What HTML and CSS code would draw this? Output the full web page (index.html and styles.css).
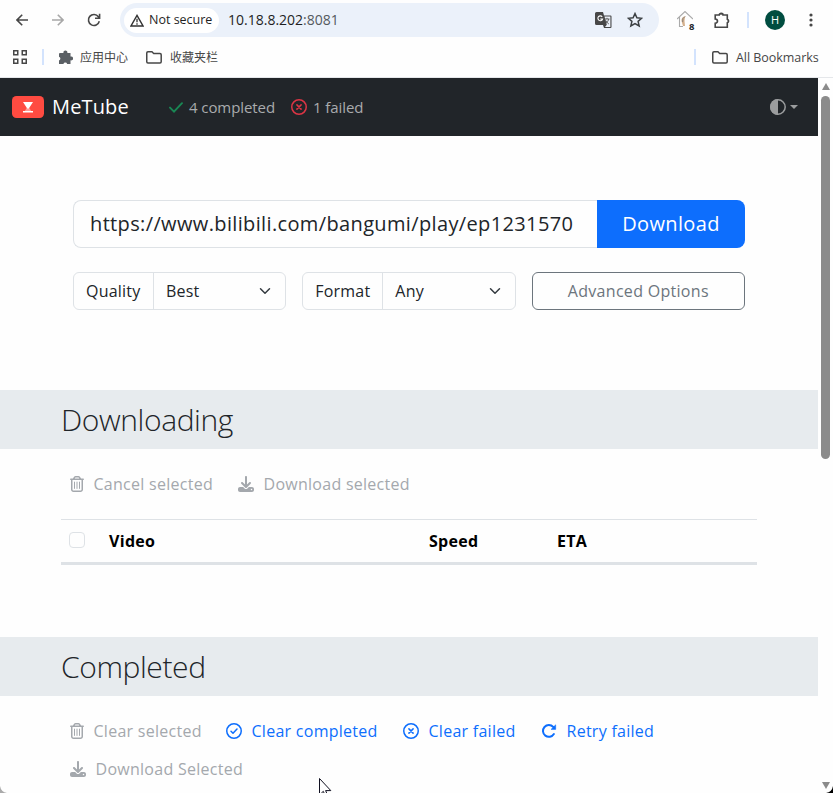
FILE: index.html
```html
<!DOCTYPE html>
<html lang="en">
<head>
<meta charset="utf-8">
<title>MeTube</title>
<link rel="stylesheet" href="styles.css">
</head>
<body>
<svg class="defs" width="0" height="0">
  <symbol id="trash" viewBox="0 0 448 512"><path fill="currentColor" d="M170.500 51.600L151.500 80l145 0-19-28.400c-1.500-2.200-4-3.600-6.700-3.600l-93.700 0c-2.700 0-5.200 1.300-6.700 3.600zm147-26.600L354.200 80 424 80c13.300 0 24 10.700 24 24s-10.700 24-24 24l-8 0 0 304c0 44.200-35.800 80-80 80l-224 0c-44.200 0-80-35.800-80-80l0-304-8 0c-13.300 0-24-10.700-24-24S10.700 80 24 80l69.800 0 36.700-55.100C140.900 9.400 158.400 0 177.100 0l93.700 0c18.700 0 36.200 9.400 46.600 24.900zM80 128l0 304c0 17.700 14.300 32 32 32l224 0c17.700 0 32-14.300 32-32l0-304L80 128zm80 64l0 208c0 8.800-7.200 16-16 16s-16-7.200-16-16l0-208c0-8.800 7.200-16 16-16s16 7.200 16 16zm80 0l0 208c0 8.800-7.200 16-16 16s-16-7.200-16-16l0-208c0-8.800 7.200-16 16-16s16 7.200 16 16zm80 0l0 208c0 8.800-7.200 16-16 16s-16-7.200-16-16l0-208c0-8.800 7.200-16 16-16s16 7.200 16 16z"/></symbol>
  <symbol id="download" viewBox="0 0 512 512"><path fill="currentColor" d="M288 32c0-17.700-14.300-32-32-32s-32 14.300-32 32l0 242.700-73.400-73.400c-12.500-12.500-32.800-12.500-45.300 0s-12.500 32.800 0 45.300l128 128c12.500 12.500 32.800 12.500 45.300 0l128-128c12.500-12.500 12.500-32.800 0-45.300s-32.800-12.500-45.300 0L288 274.700 288 32zM64 352c-35.300 0-64 28.700-64 64l0 32c0 35.300 28.700 64 64 64l384 0c35.300 0 64-28.700 64-64l0-32c0-35.300-28.700-64-64-64l-101.500 0-45.300 45.300c-25 25-65.500 25-90.500 0L165.500 352 64 352zm368 56a24 24 0 1 1 0 48 24 24 0 1 1 0-48z"/></symbol>
  <symbol id="xcircle" viewBox="0 0 16 16"><g fill="none" stroke="currentColor" stroke-width="1.5" stroke-linecap="round"><circle cx="8" cy="8" r="7.250"/><path d="M5.900 5.900l4.200 4.200M10.100 5.900l-4.200 4.200"/></g></symbol>
  <symbol id="okcircle" viewBox="0 0 16 16"><g fill="none" stroke="currentColor" stroke-width="1.500" stroke-linecap="round" stroke-linejoin="round"><circle cx="8" cy="8" r="7.250"/><path d="M5 8.200l2 2 4-4.100"/></g></symbol>
  <symbol id="folder" viewBox="0 0 16 13"><path d="M.75 2q0-1.200 1.200-1.200h4L7.700 2.500h6.300q1.200 0 1.200 1.200v7q0 1.200-1.200 1.200H2q-1.250 0-1.250-1.200z" fill="none" stroke="currentColor" stroke-width="1.500"/></symbol>
  <symbol id="chevron" viewBox="0 0 16 16"><path d="M2 5l6 6 6-6" fill="none" stroke="#343a40" stroke-width="2" stroke-linecap="round" stroke-linejoin="round"/></symbol>
</svg>

<header class="browser">
  <div class="toolbar">
    <svg class="back" width="12" height="12" viewBox="0 0 12 12"><path d="M12 6H1M6.200.8L1 6l5.200 5.200" fill="none" stroke="#474747" stroke-width="1.600"/></svg>
    <svg class="fwd" width="12" height="12" viewBox="0 0 12 12"><path d="M0 6h11M5.800.8L11 6l-5.200 5.200" fill="none" stroke="#a8a8a8" stroke-width="1.600"/></svg>
    <svg class="reload" width="14" height="14" viewBox="0 0 14 14"><path d="M12.300 8.300A5.500 5.500 0 1 1 11.400 3.700L12.500 5M12.600.8v4.500H8" fill="none" stroke="#474747" stroke-width="1.600"/></svg>
    <div class="omnibox">
      <div class="chip">
        <svg width="14" height="13" viewBox="0 0 14 13"><path d="M7 1.400L13 12H1z" fill="none" stroke="#333" stroke-width="1.400"/><path d="M7 4.800v3.500M7 9.200v1.500" stroke="#333" stroke-width="1.300"/></svg>
        <span>Not secure</span>
      </div>
      <span class="address">10.18.8.202<span class="port">:8081</span></span>
      <svg class="translate" width="17" height="17" viewBox="0 0 17 17"><path d="M1.500 0H8l1 3.500h6.500q1 0 1 1V15q0 1-1 1H9l-1-3H1.500Q0 13 0 11.500v-10Q0 0 1.500 0z" fill="#474747"/><path d="M9.500 4.600h5.900v10.300H10l1.800-2.200z" fill="#edf2fa"/><path d="M7.200 4.800A2.400 2.400 0 1 0 7.600 7H5.200" fill="none" stroke="#fff" stroke-width="1.100"/><path d="M9.500 7h5M12 5.800V7M13.800 7q-.7 3-3 4.300M10.600 8.300q1.100 2.200 3.300 3.800" fill="none" stroke="#555" stroke-width=".9"/></svg>
      <svg class="star" width="16" height="16" viewBox="0 0 15 15"><path d="M7.500 1.500l1.800 4 4.400.4-3.300 2.900 1 4.300-3.900-2.300-3.900 2.300 1-4.300L1.300 5.900l4.400-.4z" fill="none" stroke="#3c4043" stroke-width="1.400"/></svg>
    </div>
    <div class="ext">
      <svg width="16" height="16" viewBox="0 0 16 16"><path d="M0 8l8-7.500L16 8M2.500 6v9.500H6" fill="none" stroke="#aaa" stroke-width="1.100"/><path d="M8.500 5Q4 6 4.500 10l1.500 5h2l-.5-5q0-3 1-5z" fill="#d4b08c"/><path d="M8 5.500Q5 7 5.600 11" fill="none" stroke="#777" stroke-width=".8"/></svg>
      <b class="badge">8</b>
    </div>
    <svg class="puzzle" width="17" height="17" viewBox="0 0 17 17"><path d="M1.200 3h4a1.900 1.600 0 0 1 3.800 0h4.300v4.200a1.900 1.900 0 0 1 0 3.600v4.500H1.200v-4q2.300-.3 2.300-2.200T1.200 7z" fill="none" stroke="#474747" stroke-width="1.600"/><path d="M5.700 2.600a1.500 1.500 0 0 1 2.800 0zM13.700 7.500a1.700 1.700 0 0 1 0 3z" fill="#474747"/></svg>
    <i class="sep"></i>
    <div class="avatar">H</div>
    <svg class="dots" width="4" height="14" viewBox="0 0 4 14" fill="#474747"><circle cx="2" cy="2" r="1.600"/><circle cx="2" cy="7" r="1.600"/><circle cx="2" cy="12" r="1.600"/></svg>
  </div>
  <div class="bookmarks">
    <svg class="grid" width="14" height="14" viewBox="0 0 14 14" fill="none" stroke="#474747" stroke-width="1.500"><path d="M.75.75h4v4h-4zM9.250.75h4v4h-4zM.75 9.250h4v4h-4zM9.250 9.250h4v4h-4z"/></svg>
    <i class="sep"></i>
    <svg class="app" width="14" height="14" viewBox="0 0 14 14"><path d="M1 3h3.500a2 2 0 1 1 3.800 0H11.500v3.500a2 2 0 1 1 0 3.800V14H8.200a2 2 0 0 0-3.800 0H0v-3.500a2 2 0 0 0 0-3.800V4q0-1 1-1z" fill="#5a5f64"/></svg>
    <span class="bm">应用中心</span>
    <svg class="fold" width="16" height="13"><use href="#folder"/></svg>
    <span class="bm">收藏夹栏</span>
    <i class="sep last"></i>
    <svg class="fold2" width="16" height="13"><use href="#folder"/></svg>
    <span class="allbm">All Bookmarks</span>
  </div>
</header>

<div class="viewport">
  <div class="page">
    <nav class="navbar">
      <svg width="32" height="22" viewBox="0 0 32 22"><rect width="32" height="22" rx="4.500" fill="#ff4b41"/><path d="M11 6h10l-4.200 6.500h-1.600zM11 15h10v1.400H11z" fill="#fff"/><path d="M15 11.500h2l2.200 3.500h-6.400z" fill="#fff" opacity=".45"/></svg>
      <span class="brand">MeTube</span>
      <svg class="check" width="14" height="11" viewBox="0 0 14 11"><path d="M1 5.600l4 4L13 1.200" fill="none" stroke="#198754" stroke-width="1.900" stroke-linecap="round"/></svg>
      <span class="stat done">4 completed</span>
      <svg class="fail" width="16" height="16"><use href="#xcircle"/></svg>
      <span class="stat bad">1 failed</span>
      <svg class="theme" width="16" height="16" viewBox="0 0 16 16"><circle cx="8" cy="8" r="7.200" fill="none" stroke="#9b9d9e" stroke-width="1.500"/><path d="M8 0a8 8 0 0 0 0 16z" fill="#9b9d9e"/></svg>
      <i class="caret"></i>
    </nav>

    <main>
      <form class="add">
        <div class="urlrow">
          <div class="url"><span>https://www.bilibili.com/bangumi/play/ep1231570</span></div>
          <div class="submit"><span>Download</span></div>
        </div>
        <div class="options">
          <div class="group"><span class="label quality">Quality</span><span class="value">Best</span><svg width="12" height="12"><use href="#chevron"/></svg></div>
          <div class="group"><span class="label format">Format</span><span class="value">Any</span><svg width="12" height="12"><use href="#chevron"/></svg></div>
          <div class="advanced"><span>Advanced Options</span></div>
        </div>
      </form>

      <h2 class="section">Downloading</h2>
      <div class="actions first">
        <span class="btn off cancel"><svg width="14" height="16"><use href="#trash"/></svg><span>Cancel selected</span></span>
        <span class="btn off dl"><svg width="16" height="16"><use href="#download"/></svg><span>Download selected</span></span>
      </div>
      <div class="thead"><i class="box"></i><b>Video</b><b>Speed</b><b>ETA</b></div>

      <h2 class="section completed">Completed</h2>
      <div class="actions">
        <span class="btn off clear"><svg width="14" height="16"><use href="#trash"/></svg><span>Clear selected</span></span>
        <span class="btn clearok"><svg width="16" height="16"><use href="#okcircle"/></svg><span>Clear completed</span></span>
        <span class="btn clearbad"><svg width="16" height="16"><use href="#xcircle"/></svg><span>Clear failed</span></span>
        <span class="btn retry"><svg width="16" height="16" viewBox="0 0 16 16"><path d="M12.900 11A5.900 5.900 0 1 1 12.200 3.900L13.200 5" fill="none" stroke="currentColor" stroke-width="2" stroke-linecap="round"/><path d="M14.700 1.800v4.600H10z" fill="currentColor" stroke="currentColor" stroke-width=".5" stroke-linejoin="round"/></svg><span>Retry failed</span></span>
        <span class="btn off dl2"><svg width="16" height="16"><use href="#download"/></svg><span>Download Selected</span></span>
      </div>
    </main>
  </div>
  <div class="scroll"><i class="up"></i><i class="thumb"></i><i class="down"></i></div>
</div>
<svg class="cursor" width="14" height="22" viewBox="0 0 14 22"><path d="M.5.500v16.500l3.800-3.700 2.600 6 2.200-1-2.500-5.700h5.200z" fill="#fff" stroke="#101020"/></svg>
<svg class="corner" width="7" height="7" viewBox="0 0 7 7"><path d="M0 0q1 6 7 7H0z" fill="#aaa"/></svg>
<svg class="corner right" width="7" height="7" viewBox="0 0 7 7"><path d="M7 0q-1 6-7 7h7z" fill="#000"/></svg>
</body>
</html>
```
FILE: styles.css
```css
* { box-sizing: border-box; }
body { margin: 0; width: 833px; height: 793px; overflow: hidden; position: relative; background: #fefefe; color: #212529; font: 16px/24px "Open Sans", "Noto Sans", "Noto Sans CJK SC", sans-serif; white-space: nowrap; }
svg { display: block; flex: none; }
.defs { position: absolute; }
.browser { height: 78px; border-bottom: 1px solid #e5e7ea; }
.toolbar { height: 40px; display: flex; align-items: center; padding-left: 16px; }
.fwd { margin-left: 24px; }
.reload { margin-left: 23px; }
.omnibox { margin-left: 19px; width: 539px; height: 34px; border-radius: 17px; background: #ebf1fa; display: flex; align-items: center; padding-left: 4px; }
.chip { width: 95px; height: 25px; border-radius: 13px; background: #fff; display: flex; align-items: center; padding-left: 6px; gap: 5px; font-size: 12.500px; color: #1f1f1f; }
.address { margin-left: 9px; width: 367px; font-size: 14px; color: #1f1f1f; }
.port { color: #55595e; }
.star { margin-left: 15px; }
.ext { margin-left: 18px; width: 20px; height: 18px; position: relative; }
.badge { position: absolute; left: 12px; top: 10px; font-size: 9.500px; line-height: 12px; }
.puzzle { margin-left: 17px; }
.sep { width: 2px; height: 16px; background: #d3e3fd; }
.toolbar .sep { margin-left: 16px; }
.avatar { margin-left: 16px; width: 20px; height: 20px; border-radius: 50%; background: #004d40; color: #fff; font: 11px/20px "Open Sans", sans-serif; text-align: center; }
.dots { margin-left: 24px; }
.bookmarks { height: 34px; display: flex; align-items: center; padding-left: 13px; color: #474747; font-size: 12px; }
.bookmarks .sep { margin-left: 15px; }
.bookmarks .app { margin-left: 15px; }
.bm { margin-left: 7px; width: 48px; padding-top: 1px; }
.fold { margin-left: 18px; }
.fold + .bm { margin-left: 8px; }
.bookmarks .last { margin-left: 476px; }
.fold2 { margin-left: 16px; }
.allbm { margin-left: 8px; padding-top: 2px; font-size: 12.500px; letter-spacing: -.05px; }
.viewport { display: flex; height: 715px; }
.page { width: 818px; }
.navbar { height: 58px; background: #212529; display: flex; align-items: center; padding-left: 12px; }
.brand { margin-left: 8px; width: 117px; color: #fff; font-size: 20px; letter-spacing: .15px; }
.stat { color: #a9abad; font-size: 15px; margin-bottom: 1px; letter-spacing: -.08px; }
.done { width: 102px; margin-left: 6px; }
.fail { color: #dc3545; }
.bad { width: 72px; margin-left: 6px; }
.theme { margin-left: 385px; }
.caret { margin-left: 4px; border: 4px solid transparent; border-top-color: #9b9d9e; border-bottom: 0; }
.add { margin: 64px 73px 80px; }
.urlrow { display: flex; height: 48px; font-size: 20px; letter-spacing: .36px; }
.url { width: 524px; border: 1px solid #dee2e6; border-right: 0; border-radius: 8px 0 0 8px; padding: 10px 16px; line-height: 26px; }
.submit { flex: 1; background: #0d6efd; color: #fff; border-radius: 0 8px 8px 0; text-align: center; line-height: 47px; }
.options { margin-top: 24px; display: grid; grid-template-columns: repeat(3, 1fr); gap: 16px; height: 38px; letter-spacing: .2px; }
.group { display: flex; align-items: center; border: 1px solid #dee2e6; border-radius: 6px; padding-right: 14px; }
.label { width: 80px; height: 36px; line-height: 36px; padding-left: 12px; border-right: 1px solid #dee2e6; }
.value { flex: 1; padding-left: 12px; }
.advanced { border: 1px solid #6c757d; border-radius: 6px; color: #6c757d; text-align: center; line-height: 36px; letter-spacing: .3px; }
.section { margin: 0; height: 59px; padding-left: 61px; background: #e7ebee; font-size: 30px; font-weight: 300; line-height: 59px; letter-spacing: -.4px; }
.actions { padding: 16px 61px 0; display: flex; flex-wrap: wrap; }
.first { height: 70px; }
.btn { height: 38px; display: flex; align-items: center; padding-left: 9px; gap: 9.500px; color: #0d6efd; letter-spacing: .27px; }
.btn.off { color: #a4a8ad; }
.cancel { width: 168px; }
.clear { width: 156px; }
.clearok { width: 177px; }
.clearbad { width: 138px; }
.retry { width: 130px; }
.thead { margin: 0 61px; height: 46px; border-top: 1px solid #dee2e6; border-bottom: 3px solid #dee2e6; display: grid; grid-template-columns: 40px 320px 128px 1fr; padding-left: 8px; align-items: center; color: #000; letter-spacing: .3px; }
.box { width: 16px; height: 16px; margin-bottom: 2px; border: 1px solid #dee2e6; border-radius: 4px; }
.completed { margin-top: 72px; }
.scroll { width: 15px; display: flex; flex-direction: column; align-items: center; }
.up { margin-top: 5px; border: 4.500px solid transparent; border-bottom: 7px solid #8b8b8b; border-top: 0; }
.thumb { margin-top: 6px; width: 9px; height: 363px; border-radius: 5px; background: #8b8b8b; }
.down { margin-top: auto; margin-bottom: 4px; border: 4.500px solid transparent; border-top: 7px solid #8b8b8b; border-bottom: 0; }
.cursor { position: absolute; left: 319px; top: 778px; }
.corner { position: absolute; left: 0; bottom: 0; }
.right { left: auto; right: 0; }
```
